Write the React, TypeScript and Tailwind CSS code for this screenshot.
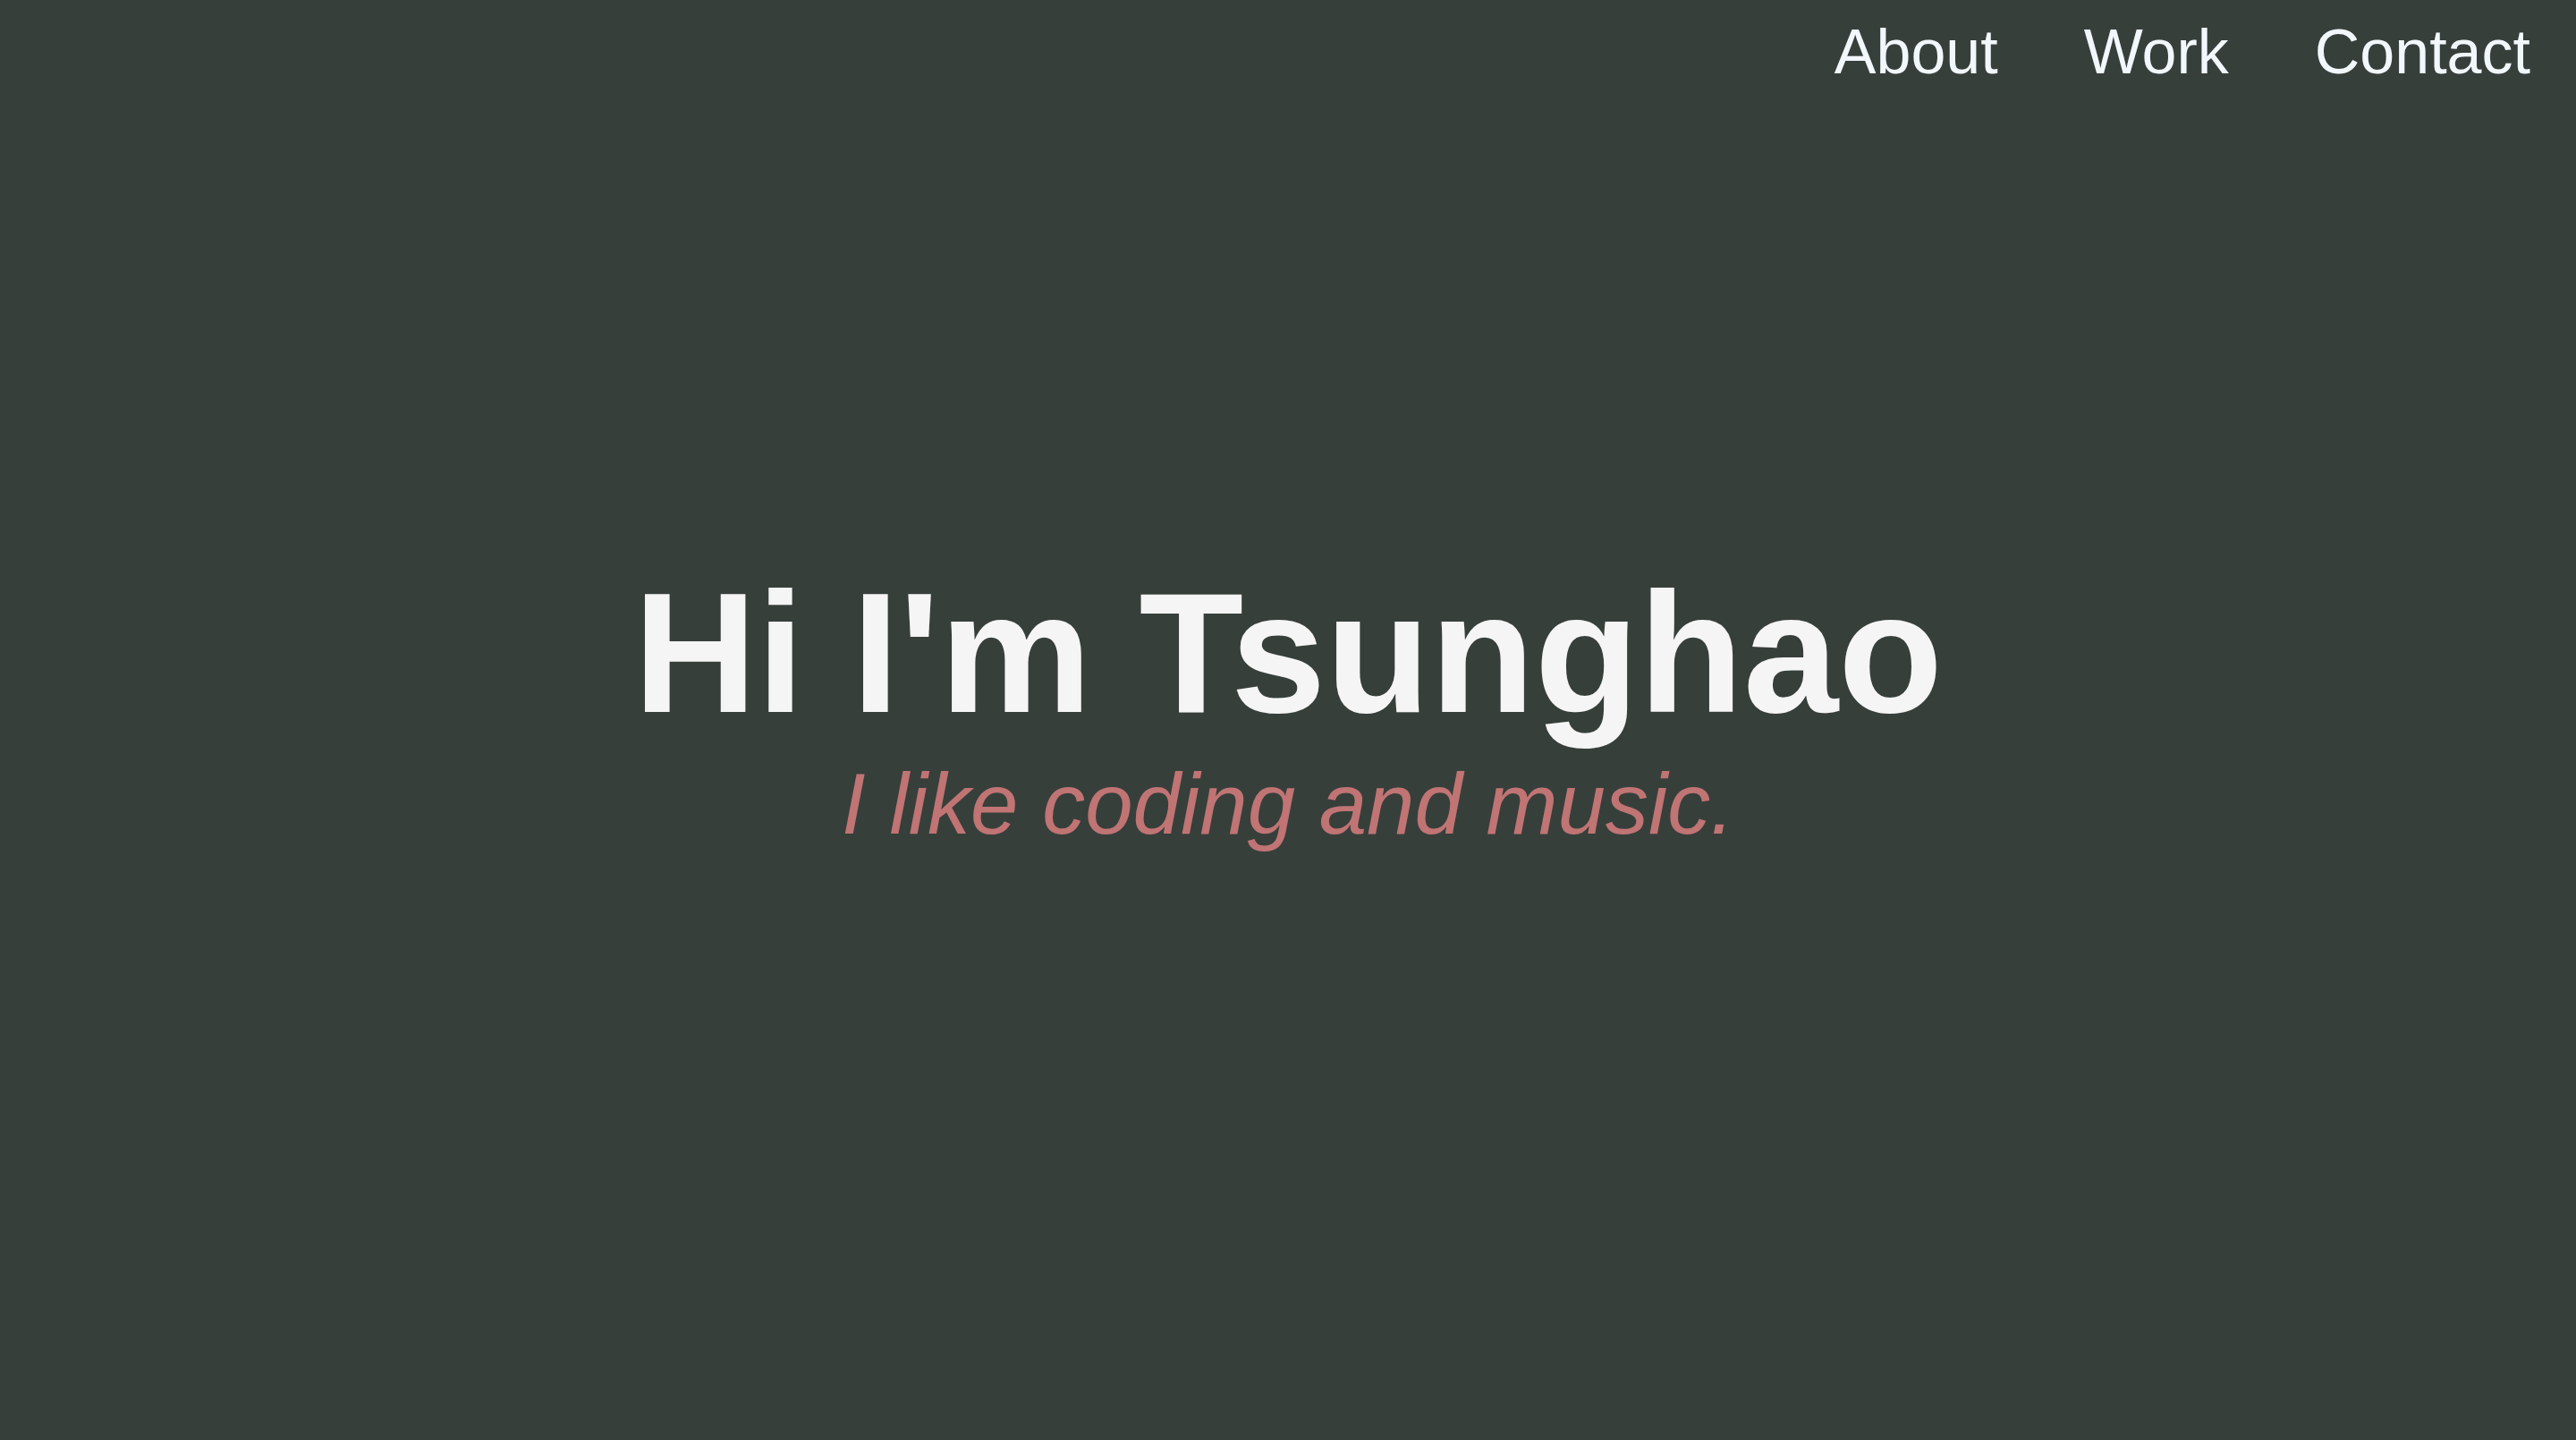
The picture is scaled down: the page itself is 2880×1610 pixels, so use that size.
const links = ['About', 'Work', 'Contact'];

const App = () => {
  return (
    <div className="flex h-[1610px] flex-col bg-[#373f3b] font-['Liberation_Sans',Arial,sans-serif]">
      <header className="flex justify-end pr-[51px] pt-[23px]">
        <nav className="flex gap-[96px]">
          {links.map((link) => (
            <a key={link} href={`#${link.toLowerCase()}`} className="text-[70px] leading-none text-[#f2f7fc]">
              {link}
            </a>
          ))}
        </nav>
      </header>

      <main className="flex flex-1 flex-col items-center justify-center pb-[122px]">
        <h1 className="text-[191px] font-bold leading-none text-[#f5f5f5]">Hi I'm Tsunghao</h1>
        <p className="mt-[26px] text-[96px] italic leading-none text-[#c07474]">I like coding and music.</p>
      </main>
    </div>
  );
};

export default App;
